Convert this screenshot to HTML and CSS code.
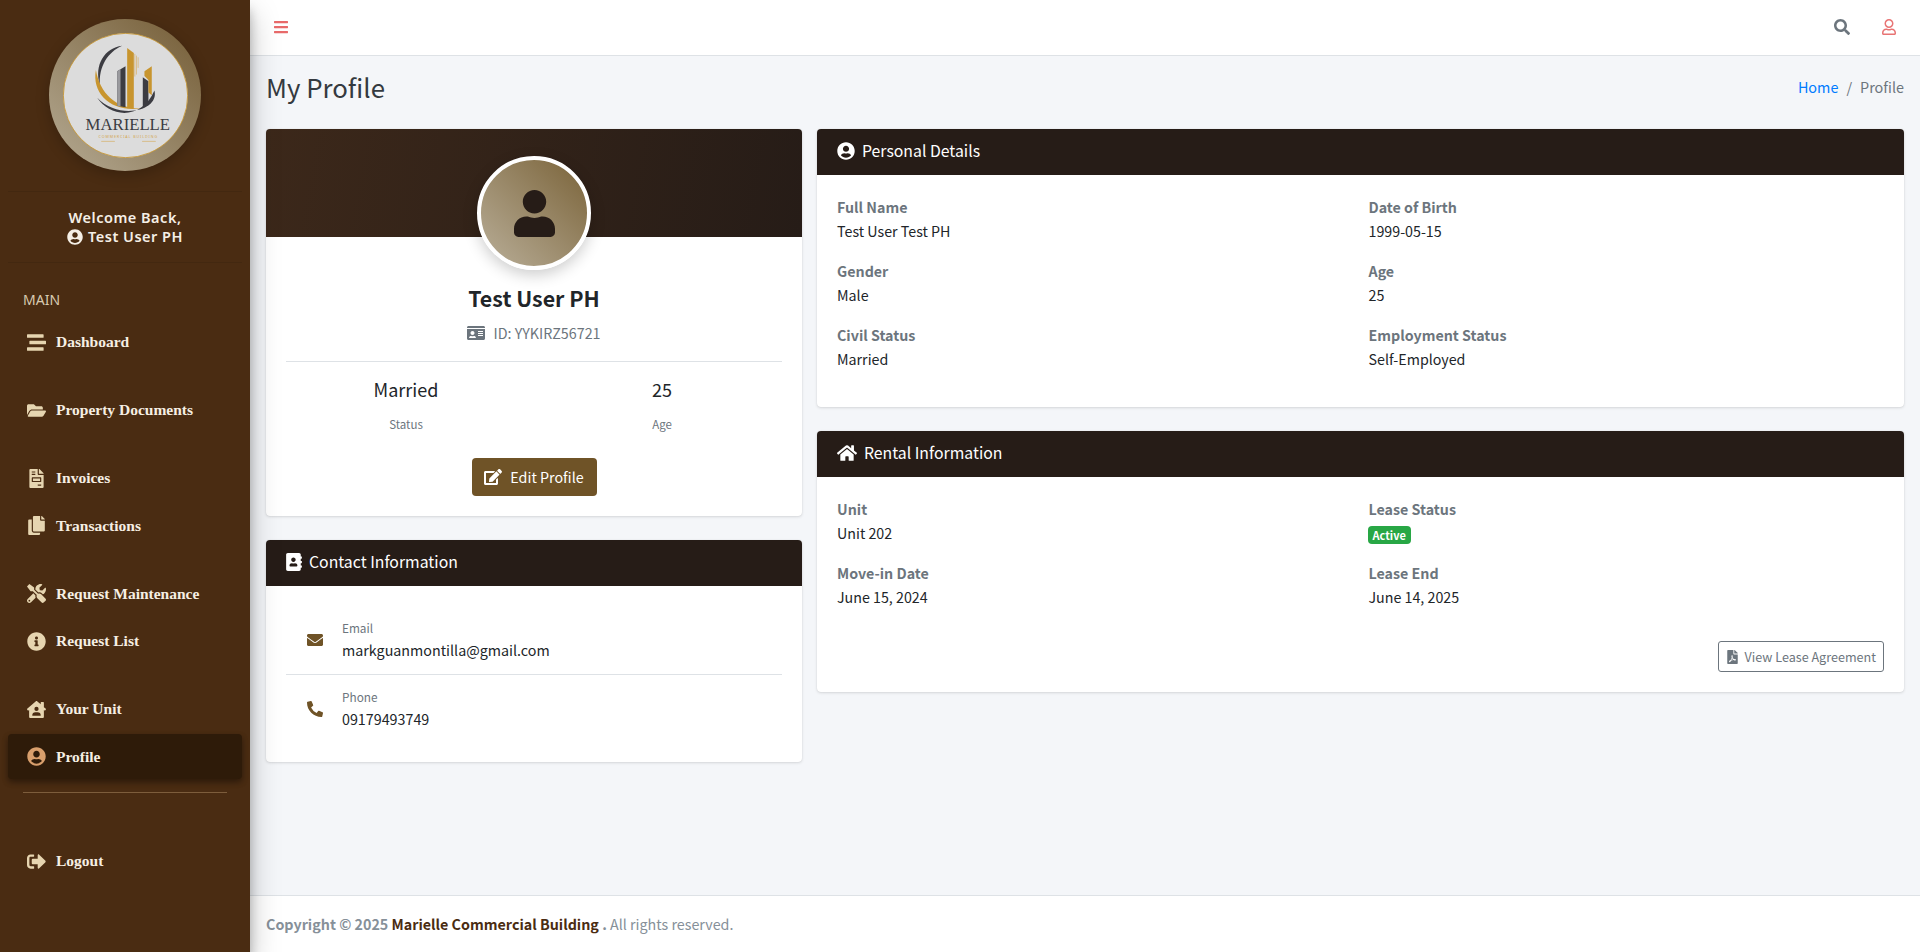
FILE: index.html
```html
<!DOCTYPE html>
<html lang="en">
<head>
<meta charset="utf-8">
<title>My Profile</title>
<link rel="stylesheet" href="styles.css">
</head>
<body>
<svg class="sprite" width="0" height="0" aria-hidden="true">
<symbol id="i-bars" viewBox="0 0 448 512"><path d="M16 132h416c8.837 0 16-7.163 16-16V76c0-8.837-7.163-16-16-16H16C7.163 60 0 67.163 0 76v40c0 8.837 7.163 16 16 16zm0 160h416c8.837 0 16-7.163 16-16v-40c0-8.837-7.163-16-16-16H16c-8.837 0-16 7.163-16 16v40c0 8.837 7.163 16 16 16zm0 160h416c8.837 0 16-7.163 16-16v-40c0-8.837-7.163-16-16-16H16c-8.837 0-16 7.163-16 16v40c0 8.837 7.163 16 16 16z"/></symbol>
<symbol id="i-search" viewBox="0 0 512 512"><path d="M505 442.7L405.3 343c-4.5-4.5-10.6-7-17-7H372c27.6-35.3 44-79.7 44-128C416 93.1 322.9 0 208 0S0 93.1 0 208s93.1 208 208 208c48.3 0 92.7-16.4 128-44v16.3c0 6.4 2.5 12.5 7 17l99.7 99.7c9.4 9.4 24.6 9.4 33.9 0l28.3-28.3c9.4-9.4 9.4-24.6.1-34zM208 336c-70.7 0-128-57.2-128-128 0-70.7 57.2-128 128-128 70.7 0 128 57.2 128 128 0 70.7-57.2 128-128 128z"/></symbol>
<symbol id="i-user-o" viewBox="0 0 448 512"><path d="M313.6 304c-28.7 0-42.5 16-89.6 16-47.1 0-60.8-16-89.6-16C60.2 304 0 364.2 0 438.4V464c0 26.5 21.5 48 48 48h352c26.5 0 48-21.5 48-48v-25.6c0-74.2-60.2-134.4-134.4-134.4zM400 464H48v-25.6c0-47.6 38.8-86.4 86.4-86.4 14.6 0 38.3 16 89.6 16 51.7 0 74.9-16 89.6-16 47.6 0 86.4 38.8 86.4 86.4V464zM224 288c79.5 0 144-64.5 144-144S303.5 0 224 0 80 64.5 80 144s64.5 144 144 144zm0-240c52.9 0 96 43.1 96 96s-43.1 96-96 96-96-43.1-96-96 43.1-96 96-96z"/></symbol>
<symbol id="i-user" viewBox="0 0 448 512"><path d="M224 256c70.7 0 128-57.3 128-128S294.7 0 224 0 96 57.3 96 128s57.3 128 128 128zm89.6 32h-16.7c-22.2 10.2-46.9 16-72.9 16s-50.6-5.8-72.9-16h-16.7C60.2 288 0 348.2 0 422.4V464c0 26.5 21.5 48 48 48h352c26.5 0 48-21.5 48-48v-41.6c0-74.2-60.2-134.4-134.4-134.4z"/></symbol>
<symbol id="i-user-circle" viewBox="0 0 496 512"><path d="M248 8C111 8 0 119 0 256s111 248 248 248 248-111 248-248S385 8 248 8zm0 96c48.6 0 88 39.4 88 88s-39.4 88-88 88-88-39.4-88-88 39.4-88 88-88zm0 344c-58.7 0-111.3-26.6-146.5-68.2 18.8-35.4 55.6-59.8 98.5-59.8 2.4 0 4.8.4 7.1 1.1 13 4.2 26.6 6.9 40.9 6.9 14.3 0 28-2.7 40.9-6.9 2.3-.7 4.7-1.1 7.1-1.1 42.9 0 79.7 24.4 98.5 59.8C359.3 421.4 306.7 448 248 448z"/></symbol>
<symbol id="i-stream" viewBox="0 0 512 512"><path d="M16 128h416c8.84 0 16-7.16 16-16V48c0-8.84-7.16-16-16-16H16C7.16 32 0 39.16 0 48v64c0 8.84 7.16 16 16 16zm480 80H80c-8.84 0-16 7.16-16 16v64c0 8.84 7.16 16 16 16h416c8.84 0 16-7.16 16-16v-64c0-8.84-7.16-16-16-16zm-64 176H16c-8.84 0-16 7.16-16 16v64c0 8.84 7.16 16 16 16h416c8.84 0 16-7.16 16-16v-64c0-8.84-7.16-16-16-16z"/></symbol>
<symbol id="i-folder" viewBox="0 0 576 512"><path d="M572.694 292.093L500.27 416.248A63.997 63.997 0 0 1 444.989 448H45.025c-18.523 0-30.064-20.093-20.731-36.093l72.424-124.155A64 64 0 0 1 152 256h399.964c18.523 0 30.064 20.093 20.73 36.093zM152 224h328v-48c0-26.51-21.49-48-48-48H272l-64-64H48C21.49 64 0 85.49 0 112v278.046l69.077-118.418C86.214 242.25 117.989 224 152 224z"/></symbol>
<symbol id="i-invoice" viewBox="0 0 384 512"><path d="M288 256H96v64h192v-64zm89-151L279.1 7c-4.5-4.5-10.6-7-17-7H256v128h128v-6.1c0-6.3-2.5-12.4-7-16.9zm-153 31V0H24C10.7 0 0 10.7 0 24v464c0 13.3 10.7 24 24 24h336c13.3 0 24-10.7 24-24V160H248c-13.2 0-24-10.8-24-24zM64 72c0-4.42 3.58-8 8-8h80c4.42 0 8 3.58 8 8v16c0 4.42-3.58 8-8 8H72c-4.42 0-8-3.58-8-8V72zm0 64c0-4.42 3.58-8 8-8h80c4.42 0 8 3.58 8 8v16c0 4.42-3.58 8-8 8H72c-4.42 0-8-3.58-8-8v-16zm256 304c0 4.42-3.58 8-8 8h-80c-4.42 0-8-3.58-8-8v-16c0-4.42 3.58-8 8-8h80c4.42 0 8 3.58 8 8v16zm0-200v96c0 8.84-7.16 16-16 16H80c-8.84 0-16-7.16-16-16v-96c0-8.84 7.16-16 16-16h224c8.84 0 16 7.16 16 16z"/></symbol>
<symbol id="i-copy" viewBox="0 0 448 512"><path d="M320 448v40c0 13.255-10.745 24-24 24H24c-13.255 0-24-10.745-24-24V120c0-13.255 10.745-24 24-24h72v296c0 30.879 25.121 56 56 56h168zm0-344V0H152c-13.255 0-24 10.745-24 24v368c0 13.255 10.745 24 24 24h272c13.255 0 24-10.745 24-24V128H344c-13.2 0-24-10.8-24-24zm120.971-31.029L375.029 7.029A24 24 0 0 0 358.059 0H352v96h96v-6.059a24 24 0 0 0-7.029-16.97z"/></symbol>
<symbol id="i-tools" viewBox="0 0 512 512"><path d="M501.1 395.7L384 278.6c-23.1-23.1-57.6-27.6-85.4-13.9L192 158.1V96L64 0 0 64l96 128h62.1l106.6 106.6c-13.6 27.8-9.2 62.3 13.9 85.4l117.1 117.1c14.6 14.6 38.2 14.6 52.7 0l52.7-52.7c14.5-14.6 14.5-38.2 0-52.7zM331.7 225c28.3 0 54.9 11 74.9 31l19.4 19.4c15.8-6.9 30.8-16.5 43.8-29.5 37.1-37.1 49.7-89.3 37.9-136.7-2.2-9-13.5-12.1-20.1-5.5l-74.4 74.4-67.9-11.3L334 98.9l74.4-74.4c6.6-6.6 3.4-17.9-5.7-20.2-47.4-11.7-99.6.9-136.6 37.9-28.5 28.5-41.9 66.1-41.2 103.6l82.1 82.1c8.1-1.9 16.5-2.9 24.7-2.9zm-103.9 82l-56.7-56.7L18.7 402.8c-25 25-25 65.5 0 90.5s65.5 25 90.5 0l123.6-123.6c-7.6-19.9-9.9-41.6-5-62.7zM64 472c-13.2 0-24-10.8-24-24 0-13.3 10.7-24 24-24s24 10.7 24 24c0 13.2-10.7 24-24 24z"/></symbol>
<symbol id="i-info" viewBox="0 0 512 512"><path d="M256 8C119.043 8 8 119.083 8 256c0 136.997 111.043 248 248 248s248-111.003 248-248C504 119.083 392.957 8 256 8zm0 110c23.196 0 42 18.804 42 42s-18.804 42-42 42-42-18.804-42-42 18.804-42 42-42zm56 254c0 6.627-5.373 12-12 12h-88c-6.627 0-12-5.373-12-12v-24c0-6.627 5.373-12 12-12h12v-64h-12c-6.627 0-12-5.373-12-12v-24c0-6.627 5.373-12 12-12h64c6.627 0 12 5.373 12 12v100h12c6.627 0 12 5.373 12 12v24z"/></symbol>
<symbol id="i-house-user" viewBox="0 0 576 512"><path d="M570.69,236.27,512,184.44V48a16,16,0,0,0-16-16H432a16,16,0,0,0-16,16V99.67L314.78,10.3C308.5,4.61,296.53,0,288,0s-20.46,4.61-26.74,10.3l-256,226A18.27,18.27,0,0,0,0,248.2a18.64,18.64,0,0,0,4.09,10.71L25.5,282.7a21.14,21.14,0,0,0,12,5.3,21.67,21.67,0,0,0,10.69-4.11l15.9-14V480a32,32,0,0,0,32,32H480a32,32,0,0,0,32-32V269.88l15.91,14A21.94,21.94,0,0,0,538.63,288a20.89,20.89,0,0,0,11.87-5.31l21.41-23.81A21.64,21.64,0,0,0,576,248.19,21,21,0,0,0,570.69,236.27ZM288,176a64,64,0,1,1-64,64A64,64,0,0,1,288,176ZM400,448H176a16,16,0,0,1-16-16,96,96,0,0,1,96-96h64a96,96,0,0,1,96,96A16,16,0,0,1,400,448Z"/></symbol>
<symbol id="i-signout" viewBox="0 0 512 512"><path d="M497 273L329 441c-15 15-41 4.5-41-17v-96H152c-13.3 0-24-10.7-24-24v-96c0-13.3 10.7-24 24-24h136V88c0-21.4 25.9-32 41-17l168 168c9.3 9.4 9.3 24.6 0 34zM192 436v-40c0-6.6-5.4-12-12-12H96c-17.7 0-32-14.3-32-32V160c0-17.7 14.3-32 32-32h84c6.6 0 12-5.4 12-12V76c0-6.6-5.4-12-12-12H96c-53 0-96 43-96 96v192c0 53 43 96 96 96h84c6.6 0 12-5.4 12-12z"/></symbol>
<symbol id="i-idcard" viewBox="0 0 576 512"><path d="M528 32H48C21.5 32 0 53.5 0 80v16h576V80c0-26.5-21.5-48-48-48zM0 432c0 26.5 21.5 48 48 48h480c26.5 0 48-21.5 48-48V128H0v304zm352-232c0-4.4 3.6-8 8-8h144c4.4 0 8 3.6 8 8v16c0 4.4-3.6 8-8 8H360c-4.4 0-8-3.6-8-8v-16zm0 64c0-4.4 3.6-8 8-8h144c4.4 0 8 3.6 8 8v16c0 4.4-3.6 8-8 8H360c-4.4 0-8-3.6-8-8v-16zm0 64c0-4.4 3.6-8 8-8h144c4.4 0 8 3.6 8 8v16c0 4.4-3.6 8-8 8H360c-4.4 0-8-3.6-8-8v-16zM176 192c35.3 0 64 28.7 64 64s-28.7 64-64 64-64-28.7-64-64 28.7-64 64-64zM67.1 396.2C75.5 370.5 99.6 352 128 352h8.2c12.3 5.1 25.7 8 39.8 8s27.6-2.9 39.8-8h8.2c28.4 0 52.5 18.5 60.9 44.2 3.2 9.9-5.2 19.8-15.6 19.8H82.7c-10.4 0-18.8-10-15.6-19.8z"/></symbol>
<symbol id="i-edit" viewBox="0 0 576 512"><path d="M402.6 83.2l90.2 90.2c3.8 3.8 3.8 10 0 13.8L274.4 405.6l-92.8 10.3c-12.4 1.4-22.9-9.1-21.5-21.5l10.3-92.8L388.8 83.2c3.8-3.8 10-3.8 13.8 0zm162-22.9l-48.8-48.8c-15.2-15.2-39.9-15.2-55.2 0l-35.4 35.4c-3.8 3.8-3.8 10 0 13.8l90.2 90.2c3.8 3.8 10 3.8 13.8 0l35.4-35.4c15.2-15.3 15.2-40 0-55.2zM384 346.2V448H64V128h229.8c3.2 0 6.2-1.3 8.5-3.5l40-40c7.6-7.6 2.2-20.5-8.5-20.5H48C21.5 64 0 85.5 0 112v352c0 26.5 21.5 48 48 48h352c26.5 0 48-21.5 48-48V306.2c0-10.7-12.9-16-20.5-8.5l-40 40c-2.2 2.3-3.5 5.3-3.5 8.5z"/></symbol>
<symbol id="i-book" viewBox="0 0 448 512"><path d="M436 160c6.6 0 12-5.4 12-12v-40c0-6.6-5.4-12-12-12h-20V48c0-26.5-21.5-48-48-48H48C21.5 0 0 21.5 0 48v416c0 26.5 21.5 48 48 48h320c26.5 0 48-21.5 48-48v-48h20c6.6 0 12-5.4 12-12v-40c0-6.6-5.4-12-12-12h-20v-64h20c6.6 0 12-5.4 12-12v-40c0-6.6-5.4-12-12-12h-20v-64h20zm-228-32c35.3 0 64 28.7 64 64s-28.7 64-64 64-64-28.7-64-64 28.7-64 64-64zm112 236.8c0 10.6-10 19.2-22.4 19.2H118.4C106 384 96 375.4 96 364.8v-19.2c0-31.8 30.1-57.6 67.2-57.6h5c12.3 5.1 25.7 8 39.8 8s27.6-2.9 39.8-8h5c37.1 0 67.2 25.8 67.2 57.6v19.2z"/></symbol>
<symbol id="i-envelope" viewBox="0 0 512 512"><path d="M502.3 190.8c3.9-3.1 9.7-.2 9.7 4.7V400c0 26.5-21.5 48-48 48H48c-26.5 0-48-21.5-48-48V195.6c0-5 5.7-7.8 9.7-4.7 22.4 17.4 52.1 39.5 154.1 113.6 21.1 15.4 56.7 47.8 92.2 47.6 35.7.3 72-32.8 92.3-47.6 102-74.1 131.6-96.3 154-113.7zM256 320c23.2.4 56.6-29.2 73.4-41.4 132.7-96.3 142.8-104.7 173.4-128.7 5.8-4.5 9.2-11.5 9.2-18.9v-19c0-26.5-21.5-48-48-48H48C21.5 64 0 85.5 0 112v19c0 7.4 3.4 14.3 9.2 18.9 30.6 23.9 40.7 32.4 173.4 128.7 16.8 12.2 50.2 41.8 73.4 41.4z"/></symbol>
<symbol id="i-phone" viewBox="0 0 512 512"><path d="M497.39 361.8l-112-48a24 24 0 0 0-28 6.9l-49.6 60.6A370.66 370.66 0 0 1 130.6 204.11l60.6-49.6a23.94 23.94 0 0 0 6.9-28l-48-112A24.16 24.16 0 0 0 122.6.61l-104 24A24 24 0 0 0 0 48c0 256.5 207.9 464 464 464a24 24 0 0 0 23.4-18.6l24-104a24.29 24.29 0 0 0-14.01-27.6z"/></symbol>
<symbol id="i-home" viewBox="0 0 576 512"><path d="M280.37 148.26L96 300.11V464a16 16 0 0 0 16 16l112.06-.29a16 16 0 0 0 15.92-16V368a16 16 0 0 1 16-16h64a16 16 0 0 1 16 16v95.64a16 16 0 0 0 16 16.05L464 480a16 16 0 0 0 16-16V300L295.67 148.26a12.19 12.19 0 0 0-15.3 0zM571.6 251.47L488 182.56V44.05a12 12 0 0 0-12-12h-56a12 12 0 0 0-12 12v72.61L318.47 43a48 48 0 0 0-61 0L4.34 251.47a12 12 0 0 0-1.6 16.9l25.5 31A12 12 0 0 0 45.15 301l235.22-193.74a12.19 12.19 0 0 1 15.3 0L530.9 301a12 12 0 0 0 16.9-1.6l25.5-31a12 12 0 0 0-1.7-16.93z"/></symbol>
<symbol id="i-pdf" viewBox="0 0 384 512"><path d="M181.9 256.1c-5-16-4.9-46.9-2-46.9 8.4 0 7.6 36.9 2 46.9zm-1.7 47.2c-7.7 20.2-17.3 43.3-28.4 62.7 18.3-7 39-17.2 62.9-21.9-12.7-9.6-24.9-23.4-34.5-40.8zM86.1 428.1c0 .8 13.2-5.4 34.9-40.2-6.7 6.3-29.1 24.5-34.9 40.2zM248 160h136v328c0 13.3-10.7 24-24 24H24c-13.3 0-24-10.7-24-24V24C0 10.7 10.7 0 24 0h200v136c0 13.2 10.8 24 24 24zm-8 171.8c-20-12.2-33.3-29-42.7-53.8 4.5-18.5 11.6-46.6 6.2-64.2-4.7-29.4-42.4-26.5-47.8-6.8-5 18.3-.4 44.1 8.1 77-11.6 27.6-28.7 64.6-40.8 85.8-.1 0-.1.1-.2.1-27.1 13.9-73.6 44.5-54.5 68 5.6 6.9 16 10 21.5 10 17.9 0 35.7-18 61.1-61.8 25.8-8.5 54.1-19.1 79-23.2 21.7 11.8 47.1 19.5 64 19.5 29.2 0 31.2-32 19.7-43.4-13.9-13.6-54.3-9.7-73.6-7.2zM377 105L279 7c-4.5-4.5-10.6-7-17-7h-6v128h128v-6.1c0-6.3-2.5-12.4-7-16.9zm-74.1 255.3c4.1-2.7-2.5-11.9-42.8-9 37.1 15.8 42.8 9 42.8 9z"/></symbol>
</svg>

<aside class="sidebar">
  <div class="brand">
    <div class="logo-ring">
      <svg class="logo" viewBox="65 65 376 376" role="img" aria-label="Marielle Commercial Building logo">
        <circle cx="253" cy="253" r="187" fill="#dcdcdc" stroke="#c8952e" stroke-width="2.5"/>
        <path d="M243 103C190 110 158 160 176 222C172 165 200 122 243 103Z" fill="#3c3c42"/>
        <path d="M164 176C150 250 215 306 305 291C230 296 176 250 164 176Z" fill="#c8952e"/>
        <path d="M168 260C205 318 300 330 340 238C356 300 232 328 168 260Z" fill="#3c3c42"/>
        <path d="M228 180L253 165V288L228 284Z" fill="#3c3c42"/>
        <path d="M228 180L238 174V286L228 284Z" fill="#9a9a9e"/>
        <path d="M258 110L278 125V291L258 291Z" fill="#c8952e"/>
        <path d="M281 128V196M286 133V190M291 138V170" stroke="#d7ae62" stroke-width="2" fill="none"/>
        <path d="M305 198L322 210V282L305 286Z" fill="#3c3c42"/>
        <path d="M310 180L332 165V252L322 244V206L310 194Z" fill="#c8952e"/>
        <text class="logo-name" x="260" y="356" text-anchor="middle" textLength="254" lengthAdjust="spacingAndGlyphs">MARIELLE</text>
        <text class="logo-sub" x="260" y="380" text-anchor="middle" textLength="176" lengthAdjust="spacing">COMMERCIAL BUILDING</text>
        <path d="M180 391H221M303 391H344" stroke="#d7ae62" stroke-width="2"/>
      </svg>
    </div>
  </div>
  <div class="welcome">
    <div>Welcome Back,</div>
    <div class="welcome-name"><svg class="ico"><use href="#i-user-circle"/></svg> Test User PH</div>
  </div>
  <div class="nav-head">MAIN</div>
  <nav class="nav">
    <div class="nav-group">
      <a class="nav-item"><svg class="nav-ico"><use href="#i-stream"/></svg><span>Dashboard</span></a>
    </div>
    <div class="nav-group">
      <a class="nav-item"><svg class="nav-ico"><use href="#i-folder"/></svg><span>Property Documents</span></a>
    </div>
    <div class="nav-group">
      <a class="nav-item"><svg class="nav-ico"><use href="#i-invoice"/></svg><span>Invoices</span></a>
      <a class="nav-item"><svg class="nav-ico"><use href="#i-copy"/></svg><span>Transactions</span></a>
    </div>
    <div class="nav-group">
      <a class="nav-item"><svg class="nav-ico"><use href="#i-tools"/></svg><span>Request Maintenance</span></a>
      <a class="nav-item"><svg class="nav-ico"><use href="#i-info"/></svg><span>Request List</span></a>
    </div>
    <div class="nav-group nav-group-last">
      <a class="nav-item"><svg class="nav-ico"><use href="#i-house-user"/></svg><span>Your Unit</span></a>
      <a class="nav-item active"><svg class="nav-ico"><use href="#i-user-circle"/></svg><span>Profile</span></a>
    </div>
    <hr class="nav-rule">
    <a class="nav-item nav-logout"><svg class="nav-ico"><use href="#i-signout"/></svg><span>Logout</span></a>
  </nav>
</aside>

<div class="main">
  <header class="topbar">
    <svg class="top-ico bars"><use href="#i-bars"/></svg>
    <div class="top-right">
      <svg class="top-ico search"><use href="#i-search"/></svg>
      <svg class="top-ico usr"><use href="#i-user-o"/></svg>
    </div>
  </header>

  <main class="content">
    <div class="page-head">
      <h1>My Profile</h1>
      <div class="crumbs"><a>Home</a><span class="sep">/</span><span>Profile</span></div>
    </div>
    <div class="columns">
      <div class="col">
        <section class="card">
          <div class="banner"></div>
          <div class="avatar-row">
            <div class="avatar"><svg class="avatar-ico"><use href="#i-user"/></svg></div>
          </div>
          <div class="profile-body">
            <h2 class="name">Test User PH</h2>
            <p class="id-line"><svg class="id-ico"><use href="#i-idcard"/></svg>ID: YYKIRZ56721</p>
            <div class="stats">
              <div class="stat"><div class="stat-val">Married</div><div class="stat-lab">Status</div></div>
              <div class="stat"><div class="stat-val">25</div><div class="stat-lab">Age</div></div>
            </div>
            <a class="btn-edit"><svg class="edit-ico"><use href="#i-edit"/></svg>Edit Profile</a>
          </div>
        </section>

        <section class="card">
          <div class="card-head"><svg class="head-ico book"><use href="#i-book"/></svg>Contact Information</div>
          <div class="contact-body">
            <div class="contact-row">
              <svg class="contact-ico"><use href="#i-envelope"/></svg>
              <div><div class="contact-lab">Email</div><div class="contact-val">markguanmontilla@gmail.com</div></div>
            </div>
            <div class="contact-row">
              <svg class="contact-ico"><use href="#i-phone"/></svg>
              <div><div class="contact-lab">Phone</div><div class="contact-val">09179493749</div></div>
            </div>
          </div>
        </section>
      </div>

      <div class="col">
        <section class="card">
          <div class="card-head"><svg class="head-ico"><use href="#i-user-circle"/></svg>Personal Details</div>
          <div class="card-body">
            <div class="details">
              <div class="field"><div class="lab">Full Name</div><div class="val">Test User Test PH</div></div>
              <div class="field"><div class="lab">Date of Birth</div><div class="val">1999-05-15</div></div>
              <div class="field"><div class="lab">Gender</div><div class="val">Male</div></div>
              <div class="field"><div class="lab">Age</div><div class="val">25</div></div>
              <div class="field"><div class="lab">Civil Status</div><div class="val">Married</div></div>
              <div class="field"><div class="lab">Employment Status</div><div class="val">Self-Employed</div></div>
            </div>
          </div>
        </section>

        <section class="card">
          <div class="card-head"><svg class="head-ico home"><use href="#i-home"/></svg>Rental Information</div>
          <div class="card-body">
            <div class="details">
              <div class="field"><div class="lab">Unit</div><div class="val">Unit 202</div></div>
              <div class="field"><div class="lab">Lease Status</div><div class="val"><span class="badge">Active</span></div></div>
              <div class="field"><div class="lab">Move-in Date</div><div class="val">June 15, 2024</div></div>
              <div class="field"><div class="lab">Lease End</div><div class="val">June 14, 2025</div></div>
            </div>
            <div class="lease-row">
              <a class="btn-lease"><svg class="pdf-ico"><use href="#i-pdf"/></svg>View Lease Agreement</a>
            </div>
          </div>
        </section>
      </div>
    </div>
  </main>

  <footer class="footer"><strong>Copyright © 2025 <span class="foot-brand">Marielle Commercial Building</span> .</strong> All rights reserved.</footer>
</div>
</body>
</html>
```

FILE: styles.css
```css
* { box-sizing: border-box; }
html, body { height: 100%; }
body {
  margin: 0;
  display: flex;
  min-height: 952px;
  overflow: hidden;
  background: #f4f6f9;
  color: #212529;
  font-family: "Noto Sans CJK SC", "Liberation Sans", sans-serif;
  font-size: 14.3px;
  line-height: 24px;
}
svg { fill: currentColor; display: block; }
.sprite { position: absolute; }

/* Sidebar */
.sidebar {
  position: relative;
  z-index: 5;
  flex: 0 0 250px;
  width: 250px;
  background: #4a2c12;
  box-shadow: 0 14px 28px rgba(0,0,0,.25), 0 10px 10px rgba(0,0,0,.22);
}
.brand {
  margin: 0 8px;
  height: 192px;
  padding-top: 19px;
  border-bottom: 1px solid #432810;
}
.logo-ring {
  width: 152px;
  height: 152px;
  margin: 0 auto;
  padding: 13.5px;
  border-radius: 50%;
  background: linear-gradient(45deg, #b5aa93, #745c35);
  box-shadow: 0 4px 14px rgba(0,0,0,.22);
}
.logo { width: 125px; height: 125px; }
.logo-name { font-family: "Liberation Serif", serif; font-size: 50px; fill: #3c3c42; }
.logo-sub { font-family: "Noto Sans", sans-serif; font-size: 11px; fill: #d3a650; }
.welcome {
  margin: 0 8px;
  height: 71px;
  padding-top: 16px;
  border-bottom: 1px solid #432810;
  color: #f5efe6;
  font-family: "Noto Sans", sans-serif;
  font-size: 14.5px;
  font-weight: 600;
  line-height: 19px;
  letter-spacing: .5px;
  text-align: center;
}
.welcome-name { display: flex; justify-content: center; align-items: center; gap: 5px; }
.ico { width: 16px; height: 16px; }
.nav-head {
  padding: 25px 23px 0;
  height: 56.5px;
  color: #d8cab0;
  font-family: "Noto Sans", sans-serif;
  font-size: 14px;
  line-height: 24px;
}
.nav { padding: 0 8px; }
.nav-group { padding-bottom: 20.5px; }
.nav-group-last { padding-bottom: 0; }
.nav-item {
  display: flex;
  align-items: center;
  height: 45px;
  margin-bottom: 2.5px;
  padding-left: 19px;
  border-radius: 4px;
  color: #f6efe3;
  font-family: "Liberation Serif", serif;
  font-size: 15.5px;
  font-weight: 700;
}
.nav-ico { flex: none; width: 19px; height: 19px; margin-right: 10px; color: #e6d5b0; }
.nav-item.active {
  background: #2e1b09;
  box-shadow: 0 3px 6px rgba(0,0,0,.2), 0 3px 6px rgba(0,0,0,.25);
}
.nav-item.active .nav-ico { color: #d99f6c; }
.nav-rule {
  height: 1px;
  margin: 13px 15px 45.7px;
  border: 0;
  background: #7d5d3c;
}

/* Main */
.main { flex: 1; min-width: 0; display: flex; flex-direction: column; height: 952px; }
.topbar {
  flex: none;
  display: flex;
  align-items: center;
  justify-content: space-between;
  height: 56px;
  padding: 0 24px 1px 24px;
  background: #fff;
  border-bottom: 1px solid #dee2e6;
}
.top-right { display: flex; align-items: center; gap: 32px; }
.top-ico { width: 16px; height: 16px; }
.bars { width: 14px; color: #e86a6a; }
.search { color: #6c757d; }
.usr { width: 14px; color: #e87474; }

.content { flex: 1; padding: 0 16px; }
.page-head {
  display: flex;
  justify-content: space-between;
  align-items: center;
  height: 73px;
  padding-bottom: 12px;
}
h1 { margin: 0; font-size: 25.8px; font-weight: 400; line-height: 34px; color: #343a40; }
.crumbs { color: #6c757d; font-size: 14.4px; }
.crumbs a { color: #007bff; }
.sep { padding: 0 8px; }

.columns { display: grid; grid-template-columns: 536px 1087px; column-gap: 15px; }
.col { display: flex; flex-direction: column; gap: 24px; }
.card {
  background: #fff;
  border-radius: 4px;
  overflow: hidden;
  box-shadow: 0 0 1px rgba(0,0,0,.125), 0 1px 3px rgba(0,0,0,.12);
}
.banner { height: 108px; background: linear-gradient(100deg, #3c281a, #261c17); }
.avatar-row { display: flex; justify-content: center; height: 32px; }
.avatar {
  position: relative;
  display: flex;
  align-items: center;
  justify-content: center;
  flex: none;
  width: 114px;
  height: 114px;
  margin-top: -81px;
  border: 4px solid #fff;
  border-radius: 50%;
  background: linear-gradient(45deg, #b9ae98, #7a6339);
  box-shadow: 0 5px 15px rgba(0,0,0,.2);
}
.avatar-ico { width: 41px; height: 47px; color: #261c17; }
.profile-body { padding: 0 20px 20px; text-align: center; }
.name { margin: 14px 0 0; font-size: 21.4px; font-weight: 700; line-height: 30px; color: #212529; }
.id-line {
  display: flex;
  justify-content: center;
  align-items: center;
  height: 24px;
  margin: 8px 0 0;
  padding-bottom: 16px;
  box-sizing: content-box;
  border-bottom: 1px solid #dee2e6;
  color: #6c757d;
  font-size: 14.3px;
}
.id-ico { width: 18px; height: 16px; margin-right: 8px; }
.stats { display: grid; grid-template-columns: 1fr 1fr; margin: 14px -8px 0; }
.stat-val { font-size: 18px; line-height: 26px; color: #212529; }
.stat-lab { margin-top: 13px; font-size: 11.5px; line-height: 18px; color: #6c757d; }
.btn-edit {
  display: inline-flex;
  align-items: center;
  justify-content: center;
  width: 125px;
  height: 38px;
  margin-top: 25px;
  border-radius: 4px;
  background: #6f5327;
  color: #fff;
  font-size: 14.3px;
}
.edit-ico { width: 18px; height: 16px; margin-right: 8px; }

.card-head {
  display: flex;
  align-items: center;
  height: 46px;
  padding: 0 20px 2px;
  background: #261c17;
  color: #fff;
  font-size: 15.8px;
}
.head-ico { width: 18px; height: 18px; margin-right: 7px; }
.head-ico.book { width: 16px; }
.head-ico.home { width: 20px; }
.card-body { padding: 20px; }

.details { display: grid; grid-template-columns: 1fr 1fr; column-gap: 16px; }
.field { margin-bottom: 16px; }
.lab { color: #6c757d; font-size: 14.25px; font-weight: 700; line-height: 24px; }
.val { color: #212529; font-size: 14.25px; line-height: 24px; }
.badge {
  display: inline-block;
  height: 18px;
  padding: 0 5px;
  border-radius: 4px;
  background: #28a745;
  color: #fff;
  font-size: 11px;
  font-weight: 700;
  line-height: 18px;
  vertical-align: top;
  margin: 5px 0 0 -1px;
}
.lease-row { display: flex; justify-content: flex-end; margin-top: 16px; }
.btn-lease {
  display: flex;
  align-items: center;
  height: 31px;
  padding: 0 7px 0 8px;
  border: 1px solid #6c757d;
  border-radius: 3px;
  color: #6c757d;
  font-size: 12.6px;
}
.pdf-ico { width: 11px; height: 14px; margin-right: 7px; }

.contact-body { padding: 20px 20px 0; height: 176px; }
.contact-row {
  display: flex;
  align-items: center;
  height: 68px;
  padding-left: 21px;
}
.contact-row + .contact-row { border-top: 1px solid #dee2e6; }
.contact-ico { flex: none; width: 16px; height: 16px; margin-right: 19px; color: #6f5327; }
.contact-lab { font-size: 11.8px; line-height: 20px; color: #6c757d; }
.contact-val { font-size: 14.3px; line-height: 24px; color: #212529; }

.footer {
  flex: none;
  height: 57px;
  padding: 16px;
  background: #fff;
  border-top: 1px solid #dee2e6;
  color: #869099;
  font-size: 14.3px;
  line-height: 24px;
}
.footer strong { font-weight: 700; }
.foot-brand { color: #4a2c12; }
```
